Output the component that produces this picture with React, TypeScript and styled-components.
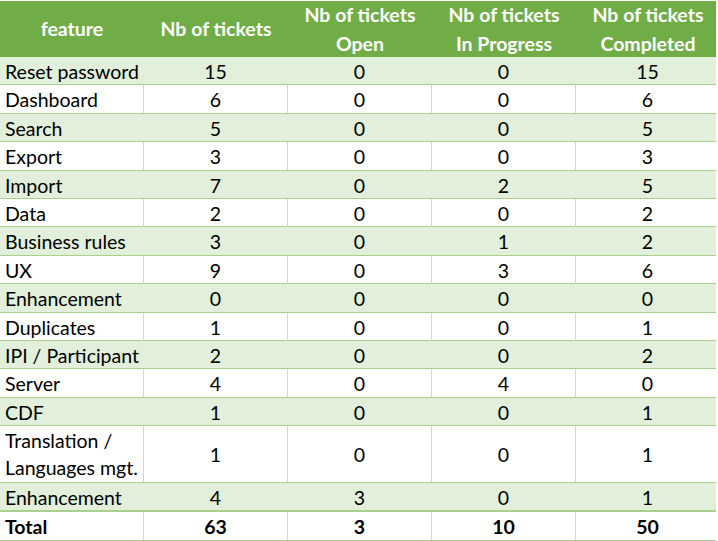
import React from "react";
import styled, { createGlobalStyle } from "styled-components";

const Global = createGlobalStyle`
  html, body { margin: 0; padding: 0; background: #ffffff; }
  body { font-family: Lato, "Open Sans", "Liberation Sans", sans-serif; }
`;

const Sheet = styled.div`
  width: 717px;
  padding-top: 1px;
  display: flex;
  flex-direction: column;
`;

const HeaderRow = styled.div`
  display: grid;
  grid-template-columns: repeat(5, 144px);
  width: 716px;
  height: 56px;
  background: #70ad47;
  color: #ffffff;
  font-weight: 700;
  font-size: 19.5px;
`;

const HeaderCell = styled.div`
  display: flex;
  flex-direction: column;
  align-items: center;
  justify-content: center;
  line-height: 28.5px;
  text-align: center;
`;

const Row = styled.div<{ $band: boolean; $tall?: boolean; $total?: boolean }>`
  box-sizing: border-box;
  display: grid;
  grid-template-columns: repeat(5, 144px);
  width: 716px;
  height: ${(p) => (p.$tall ? "56.8px" : p.$total ? "29.4px" : "28.4px")};
  background: ${(p) => (p.$band ? "#e2efda" : "#ffffff")};
  border-bottom: 1px solid #a9d08e;
  border-top: ${(p) => (p.$total ? "1px solid #a9d08e" : "0")};
  font-size: 19.5px;
  font-weight: ${(p) => (p.$total ? 700 : 400)};
  color: #000000;
`;

const Cell = styled.div<{ $first?: boolean; $lines: boolean }>`
  box-sizing: border-box;
  display: flex;
  align-items: center;
  justify-content: ${(p) => (p.$first ? "flex-start" : "center")};
  padding-left: ${(p) => (p.$first ? "5px" : "0")};
  padding-top: 1px;
  border-right: 1px solid ${(p) => (p.$lines ? "#d4d4d4" : "transparent")};
  line-height: 27px;
  white-space: pre-line;
`;

type Item = { name: string; total: number; open: number; prog: number; done: number };

const data: Item[] = [
  { name: "Reset password", total: 15, open: 0, prog: 0, done: 15 },
  { name: "Dashboard", total: 6, open: 0, prog: 0, done: 6 },
  { name: "Search", total: 5, open: 0, prog: 0, done: 5 },
  { name: "Export", total: 3, open: 0, prog: 0, done: 3 },
  { name: "Import", total: 7, open: 0, prog: 2, done: 5 },
  { name: "Data", total: 2, open: 0, prog: 0, done: 2 },
  { name: "Business rules", total: 3, open: 0, prog: 1, done: 2 },
  { name: "UX", total: 9, open: 0, prog: 3, done: 6 },
  { name: "Enhancement", total: 0, open: 0, prog: 0, done: 0 },
  { name: "Duplicates", total: 1, open: 0, prog: 0, done: 1 },
  { name: "IPI / Participant", total: 2, open: 0, prog: 0, done: 2 },
  { name: "Server", total: 4, open: 0, prog: 4, done: 0 },
  { name: "CDF", total: 1, open: 0, prog: 0, done: 1 },
  { name: "Translation /\nLanguages mgt.", total: 1, open: 0, prog: 0, done: 1 },
  { name: "Enhancement", total: 4, open: 3, prog: 0, done: 1 },
];

export default function App() {
  return (
    <>
      <Global />
      <Sheet>
        <HeaderRow>
          <HeaderCell>feature</HeaderCell>
          <HeaderCell>Nb of tickets</HeaderCell>
          <HeaderCell>
            <span>Nb of tickets</span>
            <span>Open</span>
          </HeaderCell>
          <HeaderCell>
            <span>Nb of tickets</span>
            <span>In Progress</span>
          </HeaderCell>
          <HeaderCell>
            <span>Nb of tickets</span>
            <span>Completed</span>
          </HeaderCell>
        </HeaderRow>
        {data.map((d, i) => {
          const band = i % 2 === 0;
          const lines = !band;
          return (
            <Row key={i} $band={band} $tall={d.name.includes("\n")}>
              <Cell $first $lines={lines}>{d.name}</Cell>
              <Cell $lines={lines}>{d.total}</Cell>
              <Cell $lines={lines}>{d.open}</Cell>
              <Cell $lines={lines}>{d.prog}</Cell>
              <Cell $lines={lines}>{d.done}</Cell>
            </Row>
          );
        })}
        <Row $band={false} $total>
          <Cell $first $lines>Total</Cell>
          <Cell $lines>63</Cell>
          <Cell $lines>3</Cell>
          <Cell $lines>10</Cell>
          <Cell $lines>50</Cell>
        </Row>
      </Sheet>
    </>
  );
}
